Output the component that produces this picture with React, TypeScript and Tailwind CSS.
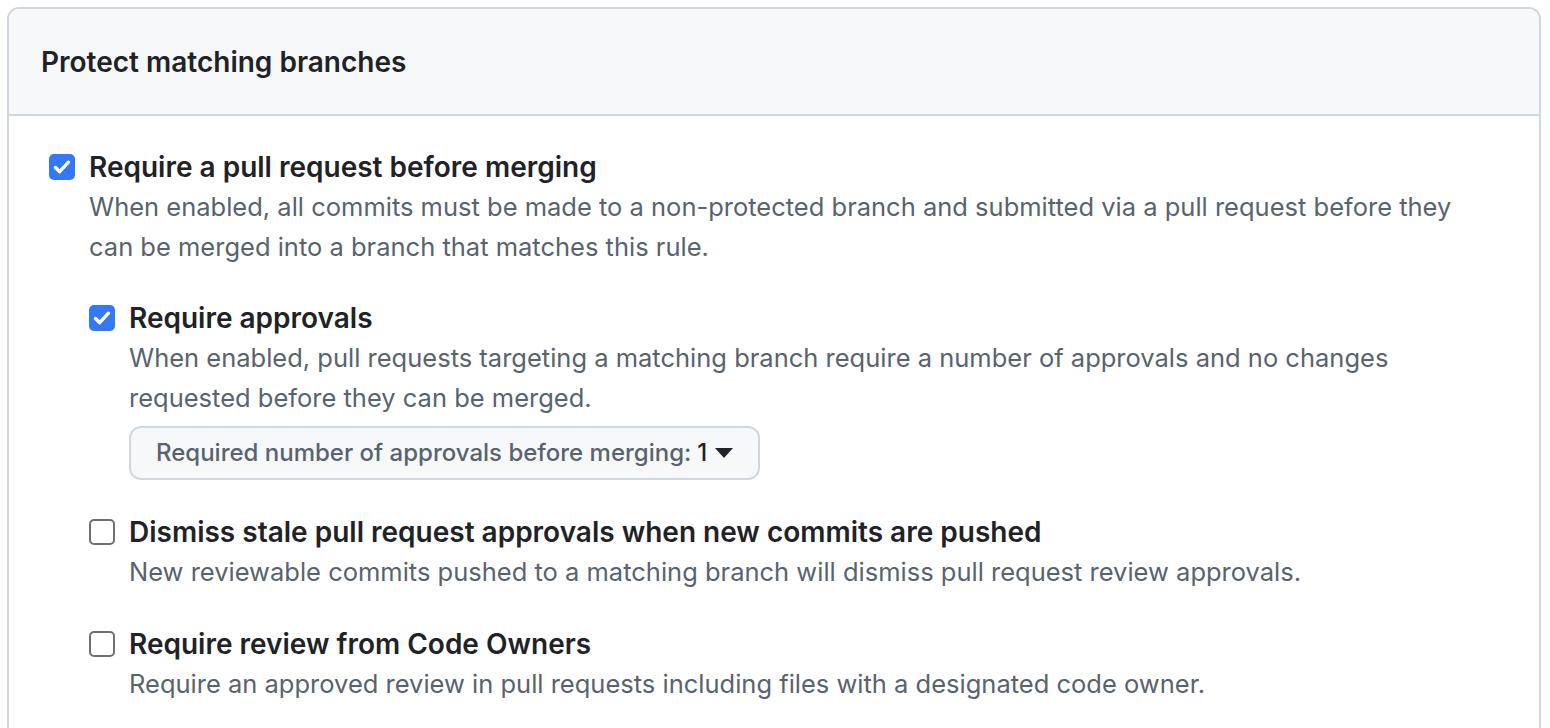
import type { ReactNode } from "react";

const FONT = { fontFamily: 'Inter, "Liberation Sans", Arial, sans-serif' };

function CheckBox({ checked }: { checked: boolean }) {
  if (checked) {
    return (
      <span className="flex h-[26px] w-[26px] shrink-0 items-center justify-center rounded-[5px] bg-[#3478f6]">
        <svg width="20" height="20" viewBox="0 0 20 20" aria-hidden="true">
          <path
            d="M3.5 10.5l4.2 4.2L16.5 5.2"
            fill="none"
            stroke="#fff"
            strokeWidth="3.4"
            strokeLinecap="round"
            strokeLinejoin="round"
          />
        </svg>
      </span>
    );
  }
  return (
    <span className="block h-[26px] w-[26px] shrink-0 rounded-[5px] border-2 border-[#707070] bg-white" />
  );
}

function Option({
  checked,
  label,
  children,
}: {
  checked: boolean;
  label: string;
  children?: ReactNode;
}) {
  return (
    <div className="flex gap-[14px]">
      <div className="flex h-[40px] items-center">
        <CheckBox checked={checked} />
      </div>
      <div className="flex-1">
        <div className="text-[28px] font-semibold leading-[40px] text-[#1f2328]">{label}</div>
        {children}
      </div>
    </div>
  );
}

function Note({ children }: { children: ReactNode }) {
  return <p className="text-[25.5px] leading-[40px] text-[#59636e]">{children}</p>;
}

export default function App() {
  return (
    <div className="min-h-[728px] bg-white pl-[7px] pr-[9px] pt-[7px]" style={FONT}>
      <div className="overflow-hidden rounded-t-[12px] border-2 border-b-0 border-[#d0d7de]">
        <div className="flex h-[107px] items-center border-b-2 border-[#d0d7de] bg-[#f6f8fa] px-[32px]">
          <h2 className="text-[28px] font-semibold text-[#1f2328]">Protect matching branches</h2>
        </div>
        <div className="pl-[40px] pr-[60px] pb-[40px] pt-[31px]">
          <Option checked label="Require a pull request before merging">
            <Note>
              When enabled, all commits must be made to a non-protected branch and submitted via a pull
              request before they can be merged into a branch that matches this rule.
            </Note>
            <div className="mt-[31px] flex flex-col gap-[32px]">
              <Option checked label="Require approvals">
                <Note>
                  When enabled, pull requests targeting a matching branch require a number of approvals
                  and no changes requested before they can be merged.
                </Note>
                <button
                  type="button"
                  className="mt-[8px] flex h-[54px] w-[631px] items-center justify-start gap-[8px] whitespace-nowrap rounded-[12px] border-2 border-[#d0d7de] bg-[#f6f8fa] pl-[25px] pr-[16px] text-[24px] font-medium text-[#1f2328]"
                >
                  <span className="text-[#59636e]">Required number of approvals before merging:</span>
                  <span className="-ml-[2px]">1</span>
                  <svg width="18" height="10" viewBox="0 0 18 10" aria-hidden="true">
                    <path d="M0 0h18L9 10z" fill="#1f2328" />
                  </svg>
                </button>
              </Option>
              <Option checked={false} label="Dismiss stale pull request approvals when new commits are pushed">
                <Note>New reviewable commits pushed to a matching branch will dismiss pull request review approvals.</Note>
              </Option>
              <Option checked={false} label="Require review from Code Owners">
                <Note>Require an approved review in pull requests including files with a designated code owner.</Note>
              </Option>
            </div>
          </Option>
        </div>
      </div>
    </div>
  );
}
